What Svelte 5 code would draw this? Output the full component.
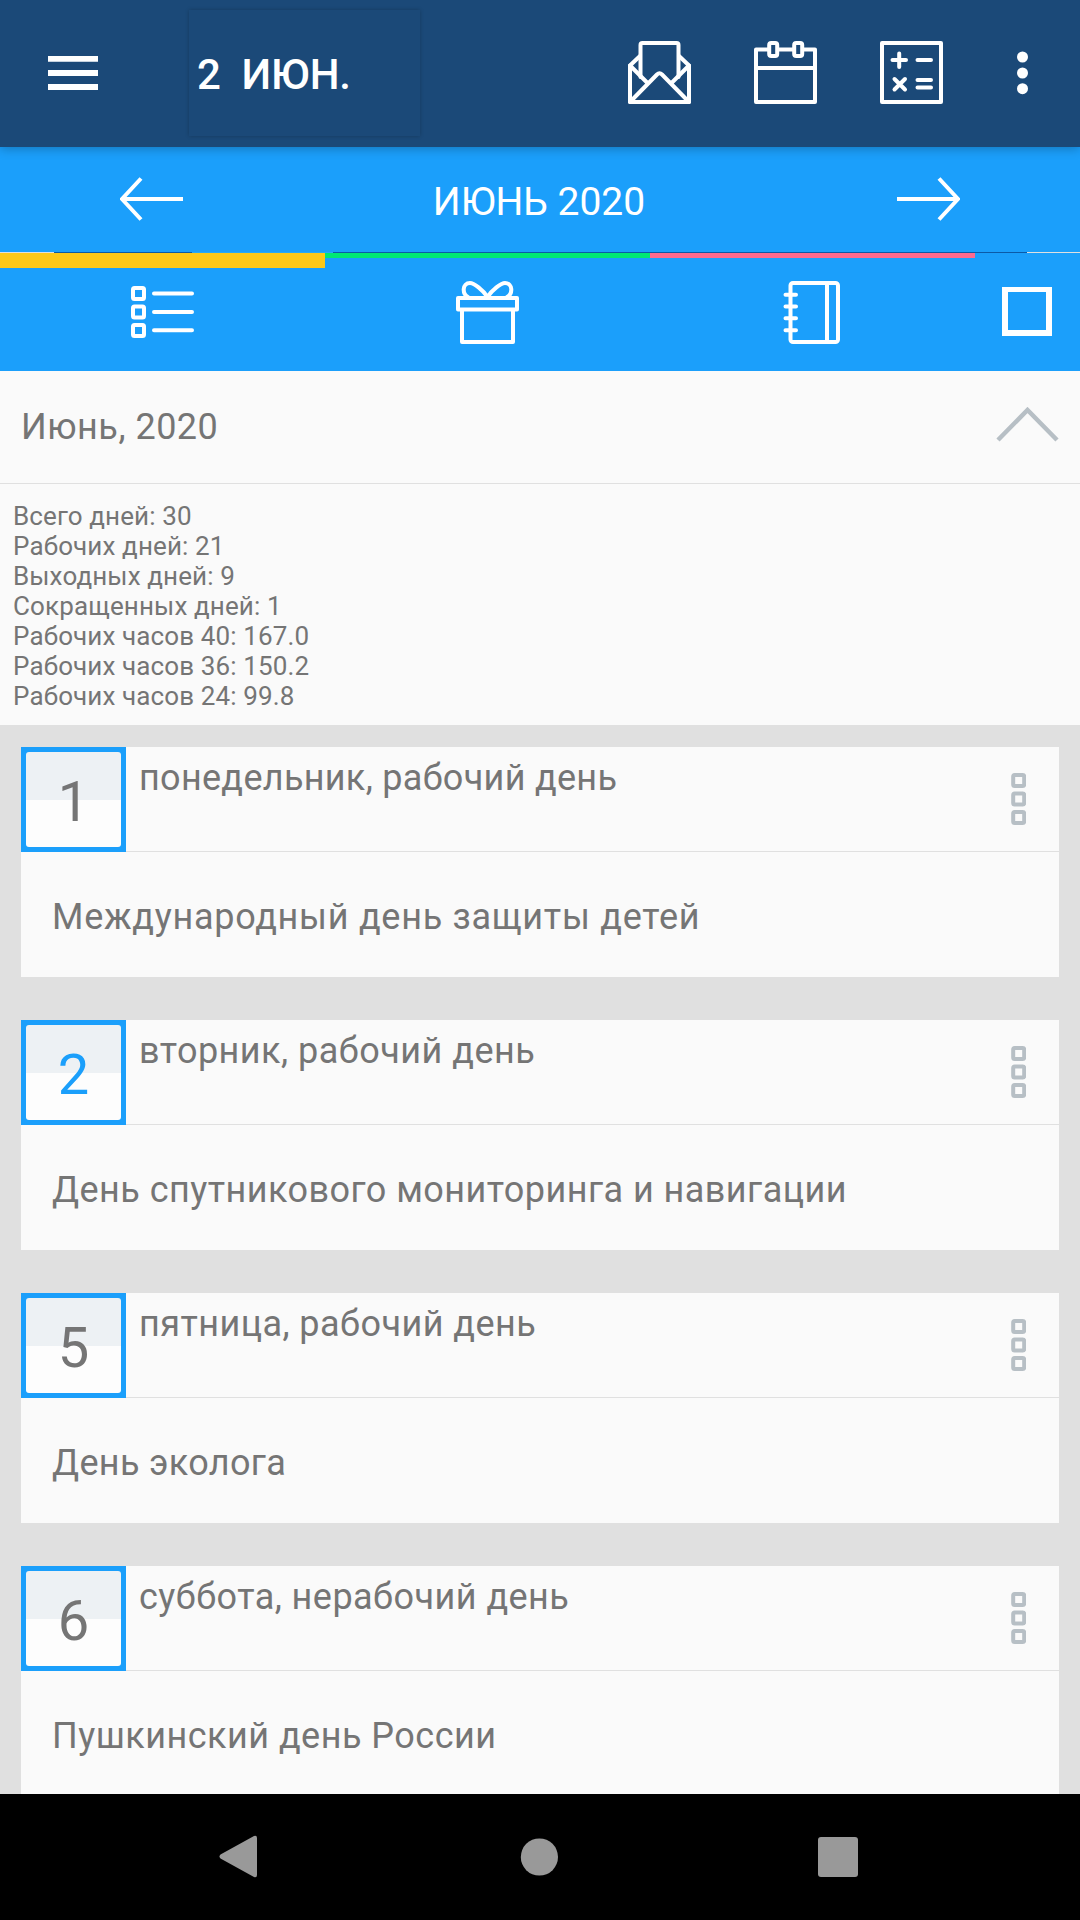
<script lang="ts">
    interface Day {
        number: number;
        title: string;
        holiday: string;
        titleSpacing: number;
        holidaySpacing: number;
        today?: boolean;
    }

    const stats: string[] = [
        "Всего дней: 30",
        "Рабочих дней: 21",
        "Выходных дней: 9",
        "Сокращенных дней: 1",
        "Рабочих часов 40: 167.0",
        "Рабочих часов 36: 150.2",
        "Рабочих часов 24: 99.8",
    ];

    const days: Day[] = [
        {
            number: 1,
            title: "понедельник, рабочий день",
            holiday: "Международный день защиты детей",
            titleSpacing: 0.3,
            holidaySpacing: 0.72,
        },
        {
            number: 2,
            title: "вторник, рабочий день",
            holiday: "День спутникового мониторинга и навигации",
            titleSpacing: 0.48,
            holidaySpacing: 0.46,
            today: true,
        },
        {
            number: 5,
            title: "пятница, рабочий день",
            holiday: "День эколога",
            titleSpacing: 0.45,
            holidaySpacing: 0.33,
        },
        {
            number: 6,
            title: "суббота, нерабочий день",
            holiday: "Пушкинский день России",
            titleSpacing: 0.46,
            holidaySpacing: 0.48,
        },
    ];
</script>

<div class="screen">
    <header class="toolbar">
        <svg class="burger" width="50" height="34" viewBox="0 0 50 34">
            <path d="M0 2.9h50M0 17h50M0 31h50" stroke="#fff" stroke-width="5.8" />
        </svg>
        <div class="date">2&nbsp; ИЮН.</div>
        <div class="actions">
            <svg class="icon" width="63" height="63" viewBox="0 0 63 63">
                <path d="M12.5 36V4a2 2 0 0 1 2-2h34a2 2 0 0 1 2 2v32" />
                <path d="M12 15 2 24.5V61h59V24.5L51 15" />
                <path d="M2 24.5 19.5 42M61 24.5 43.5 42" />
                <path d="M2 61 29 33.5q2.5-2.5 5 0L61 61" />
            </svg>
            <svg class="icon" width="63" height="63" viewBox="0 0 63 63">
                <path d="M14 8.5H2V61h59V8.5H50M25 8.5h14M2 27h59" />
                <rect x="15.2" y="2" width="8" height="13" rx="2" />
                <rect x="40.2" y="2" width="8" height="13" rx="2" />
            </svg>
            <svg class="icon" width="63" height="63" viewBox="0 0 63 63">
                <rect x="2" y="2" width="59" height="59" />
                <path d="M12.5 19H26M19.2 12.5V26M37.5 19H51M14.5 38 25 48.5M25 38 14.5 48.5M37.5 39H51M37.5 46.5H51" />
            </svg>
        </div>
        <svg class="more" width="11" height="44" viewBox="0 0 11 44">
            <circle cx="5.5" cy="6" r="5.5" />
            <circle cx="5.5" cy="22" r="5.5" />
            <circle cx="5.5" cy="37.7" r="5.5" />
        </svg>
    </header>

    <nav class="month">
        <svg class="icon" width="63" height="44" viewBox="0 0 63 44">
            <path d="M63 22H2M21 1.5 2 22 21 42.5" />
        </svg>
        <span>ИЮНЬ 2020</span>
        <svg class="icon" width="63" height="44" viewBox="0 0 63 44">
            <path d="M0 22h61M42 1.5 61 22 42 42.5" />
        </svg>
    </nav>

    <div class="divider"><i></i><i></i><i></i><i></i><i></i></div>

    <div class="tabs">
        <div class="tab active">
            <svg class="icon" width="63" height="63" viewBox="0 0 63 63">
                <rect x="2" y="7" width="11" height="11" rx="1.5" />
                <rect x="2" y="25.5" width="11" height="11" rx="1.5" />
                <rect x="2" y="44" width="11" height="11" rx="1.5" />
                <path d="M23 12.5h38M23 31h38M23 49.3h38" />
            </svg>
        </div>
        <div class="tab gifts">
            <svg class="icon" width="63" height="63" viewBox="0 0 63 63">
                <rect x="2" y="17" width="59" height="11.5" />
                <path d="M6 29v32h51V29" />
                <path d="M31.5 16C27 9 18 2 14 2 6 2 6 13 12 16M31.5 16C36 9 45 2 49 2c8 0 8 11 2 14" />
            </svg>
        </div>
        <div class="tab notes">
            <svg class="icon" width="63" height="63" viewBox="0 0 63 63">
                <rect x="9.5" y="2" width="47.5" height="59" rx="2.5" />
                <path d="M46 2v59M4.5 13.7H15M4.5 25.5H15M4.5 37.3H15M4.5 49.2H15" />
            </svg>
        </div>
        <div class="check"><span></span></div>
    </div>

    <section class="summary">
        <div class="summary-head">
            <h1>Июнь, 2020</h1>
            <svg width="63" height="36" viewBox="0 0 63 36">
                <path d="M2 33 31.5 3 61 33" fill="none" stroke="#b7bfc5" stroke-width="4.5" />
            </svg>
        </div>
        <ul>
            {#each stats as line}
                <li>{line}</li>
            {/each}
        </ul>
    </section>

    <main class="days">
        {#each days as day}
            <article class="card">
                <div class="card-head">
                    <div class="number" class:today={day.today}>
                        <span>{day.number}</span>
                    </div>
                    <h2 style="letter-spacing: {day.titleSpacing}px">{day.title}</h2>
                    <svg width="15" height="52" viewBox="0 0 15 52">
                        <rect x="2.2" y="2" width="11" height="11" rx="1.5" />
                        <rect x="2.2" y="20.5" width="11" height="11" rx="1.5" />
                        <rect x="2.2" y="39" width="11" height="11" rx="1.5" />
                    </svg>
                </div>
                <p style="letter-spacing: {day.holidaySpacing}px">{day.holiday}</p>
            </article>
        {/each}
    </main>

    <footer class="system">
        <svg width="38" height="43" viewBox="0 0 38 43">
            <path d="M1.5 19.5Q-.5 21.5 1.5 23.5L35 42q3 1 3-2V3q0-3-3-2z" />
        </svg>
        <svg width="38" height="38" viewBox="0 0 38 38">
            <circle cx="19.4" cy="19" r="18.6" />
        </svg>
        <svg width="40" height="40" viewBox="0 0 40 40">
            <rect width="40" height="40" rx="3" />
        </svg>
    </footer>
</div>

<style>
    :global(body) {
        margin: 0;
        background: #000;
    }
    .screen {
        display: flex;
        flex-direction: column;
        width: 1080px;
        height: 1920px;
        overflow: hidden;
        background: #e0e0e0;
        color: #757575;
        font-family: Roboto, "Liberation Sans", sans-serif;
    }
    svg {
        display: block;
        flex: none;
    }
    h1,
    h2,
    p,
    ul {
        margin: 0;
        padding: 0;
        font-weight: 400;
    }
    .icon {
        fill: none;
        stroke: #fff;
        stroke-width: 4;
        stroke-linecap: round;
        stroke-linejoin: round;
    }

    /* top bar */
    .toolbar {
        position: relative;
        z-index: 1;
        flex: none;
        display: flex;
        align-items: center;
        box-sizing: border-box;
        height: 147px;
        padding: 0 0 1px 48px;
        background: #1b4978;
        box-shadow: 0 2px 10px rgba(0, 0, 0, 0.25);
    }
    .burger {
        margin-right: 91px;
    }
    .date {
        box-sizing: border-box;
        width: 231px;
        height: 126px;
        padding-left: 8px;
        line-height: 129px;
        font-size: 42px;
        font-weight: 500;
        letter-spacing: -0.1px;
        color: #fff;
        white-space: pre;
        box-shadow: 0 0 4px rgba(0, 0, 0, 0.22);
    }
    .actions {
        display: flex;
        gap: 63px;
        margin-left: 208px;
        padding-bottom: 1px;
    }
    .more {
        margin-left: 74px;
        fill: #fff;
    }

    /* month switcher */
    .month {
        flex: none;
        display: flex;
        align-items: center;
        justify-content: space-between;
        box-sizing: border-box;
        height: 105px;
        padding: 0 120px 2px;
        background: #1b9ffb;
        color: #fff;
        font-size: 39px;
    }
    .month span {
        padding: 6px 2px 0 0;
    }
    .month .icon {
        stroke-linecap: butt;
        stroke-linejoin: miter;
    }
    .divider {
        flex: none;
        display: grid;
        grid-template-columns: 54px 138px 141px 694px 53px;
        height: 1px;
        background: #0c5aa6;
    }
    .divider i:nth-child(1),
    .divider i:nth-child(5) {
        background: #e0e0e0;
    }
    .divider i:nth-child(3) {
        background: #29a9f5;
    }

    /* tabs */
    .tabs {
        flex: none;
        display: flex;
        height: 118px;
        background: #1b9ffb;
    }
    .tab {
        display: flex;
        justify-content: center;
        box-sizing: border-box;
        width: 325px;
        padding-top: 23px;
        border-top: 5px solid;
    }
    .tab.active {
        padding-top: 13px;
        border-top: 15px solid #fdc819;
    }
    .tab.gifts {
        border-color: #00e874;
    }
    .tab.notes {
        border-color: #ff6a8e;
    }
    .check {
        flex: 1;
        padding: 34px 0 0 27px;
    }
    .check span {
        display: block;
        box-sizing: border-box;
        width: 50px;
        height: 49px;
        border: 6px solid #fff;
        border-top-width: 5px;
    }

    /* month totals */
    .summary {
        flex: none;
        box-sizing: border-box;
        height: 354px;
        background: #fafafa;
    }
    .summary-head {
        display: flex;
        align-items: center;
        justify-content: space-between;
        box-sizing: border-box;
        height: 113px;
        padding: 0 21px;
        border-bottom: 1px solid #e0e0e0;
    }
    .summary-head svg {
        margin-top: -4px;
    }
    h1 {
        font-size: 36px;
        letter-spacing: 0.5px;
    }
    ul {
        padding: 17px 13px 0;
        list-style: none;
    }
    li {
        font-size: 26px;
        line-height: 30px;
        letter-spacing: 0.12px;
    }

    /* list of days */
    .days {
        flex: 1;
        display: flex;
        flex-direction: column;
        gap: 43px;
        min-height: 0;
        overflow: hidden;
        padding: 22px 21px 0;
    }
    .card {
        flex: none;
        height: 230px;
        background: #fafafa;
    }
    .card-head {
        display: flex;
        box-sizing: border-box;
        height: 105px;
        border-bottom: 1px solid #e0e0e0;
    }
    .card-head svg {
        margin: 26px 33px 0 auto;
        fill: none;
        stroke: #b7bfc5;
        stroke-width: 4;
    }
    .number {
        flex: none;
        box-sizing: border-box;
        width: 105px;
        height: 105px;
        padding: 5px;
        background: #1b9ffb;
        font-size: 56px;
        line-height: 101px;
        text-align: center;
    }
    .number span {
        display: block;
        height: 95px;
        border-radius: 3px;
        background: linear-gradient(#edf1f4 48px, #fdfdfd 48px);
    }
    .number.today {
        color: #1b9ffb;
    }
    h2 {
        padding: 10px 0 0 13px;
        font-size: 36px;
        line-height: 42px;
    }
    .card p {
        padding-left: 31px;
        font-size: 36px;
        line-height: 130px;
    }

    /* system buttons */
    .system {
        flex: none;
        display: flex;
        align-items: center;
        box-sizing: border-box;
        height: 126px;
        padding: 0 0 1px 219px;
        background: #000;
        fill: #999;
    }
    .system svg:nth-child(2) {
        margin: 0 260px 0 263px;
    }
</style>
